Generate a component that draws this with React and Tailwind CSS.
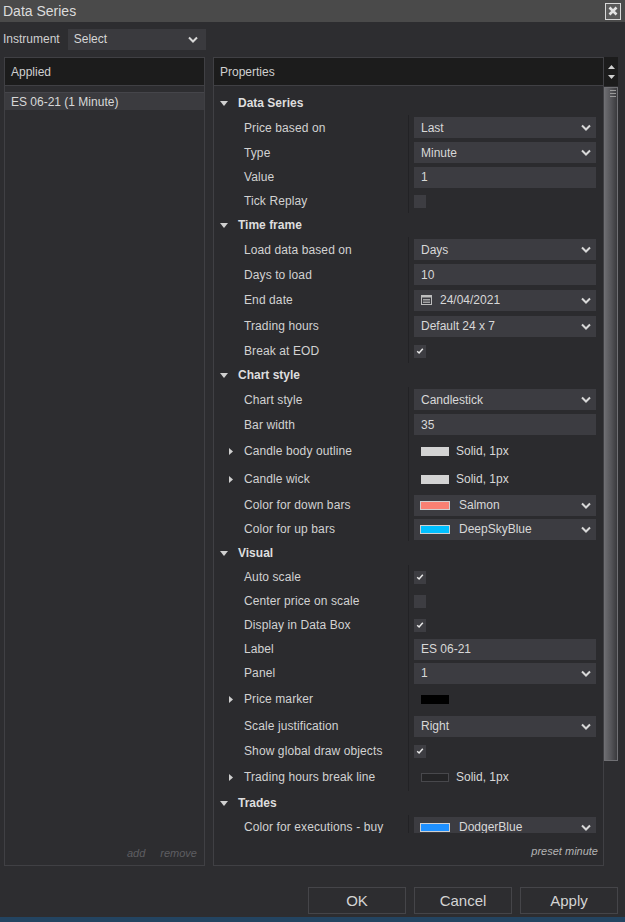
import React from 'react'

const font = { fontFamily: '"Liberation Sans", Arial, sans-serif' }

function Chevron() {
  return (
    <svg width="10" height="7" viewBox="0 0 10 7" className="shrink-0">
      <path d="M1 1.5 L5 5.5 L9 1.5" fill="none" stroke="#d8d8d8" strokeWidth="2" />
    </svg>
  )
}

function Check() {
  return (
    <div className="w-[12px] h-[13px] bg-[#3d3d42] flex items-center justify-center">
      <svg width="8" height="8" viewBox="0 0 8 8">
        <path d="M1.2 4.2 L3.1 6 L6.8 1.8" fill="none" stroke="#e8e8e8" strokeWidth="1.5" />
      </svg>
    </div>
  )
}

function EmptyBox() {
  return <div className="w-[12px] h-[13px] bg-[#3d3d42]" />
}

function Select({ text, swatch, calendar }) {
  return (
    <div className="h-[21px] w-full bg-[#3c3c41] flex items-center pl-[6px] pr-[5px]">
      {swatch && <div className={`w-[30px] h-[9px] border border-[#d0d0d0] mr-[8px] ${swatch}`} />}
      {calendar && (
        <svg width="11" height="10" viewBox="0 0 11 10" className="mr-[7px] ml-[1px]">
          <rect x="0.5" y="0.5" width="10" height="9" fill="none" stroke="#bdbdbd" />
          <rect x="0.5" y="0.5" width="10" height="2" fill="#bdbdbd" />
          <path d="M2 4.5 H9 M2 6 H9 M2 7.5 H9" stroke="#bdbdbd" strokeWidth="0.8" />
        </svg>
      )}
      <span className="flex-1 pl-[1px]">{text}</span>
      <Chevron />
    </div>
  )
}

function TextBox({ text }) {
  return (
    <div className="h-[21px] w-full bg-[#3c3c41] flex items-center pl-[7px]">{text}</div>
  )
}

function Stroke({ swatch, text }) {
  return (
    <div className="flex items-center pl-[7px]">
      <div className={`w-[28px] h-[9px] mr-[7px] ${swatch}`} />
      <span>{text}</span>
    </div>
  )
}

function Row({ h, label, expand, children }) {
  return (
    <div className={`flex ${h}`}>
      <div className="w-[194px] flex items-center pl-[15px]">
        <div className="w-[15px] flex items-center">
          {expand && (
            <svg width="4" height="7" viewBox="0 0 4 7">
              <path d="M0 0 L4 3.5 L0 7 Z" fill="#cfcfcf" />
            </svg>
          )}
        </div>
        <span className="text-[#d2d2d2] whitespace-nowrap tracking-[0.1px]">{label}</span>
      </div>
      <div className="flex-1 border-l border-[#222225] pl-[5px] pr-[7px] flex items-center text-[#d8d8d8]">
        {children}
      </div>
    </div>
  )
}

function Section({ title }) {
  return (
    <div className="h-[24px] flex items-center pl-[6px]">
      <svg width="8" height="5" viewBox="0 0 8 5" className="mr-[10px]">
        <path d="M0 0 L8 0 L4 5 Z" fill="#d0d0d0" />
      </svg>
      <span className="font-bold text-[#dedede]">{title}</span>
    </div>
  )
}

export default function App() {
  return (
    <div className="w-[625px] h-[922px] bg-[#2d2d30] flex flex-col text-[12px] overflow-hidden" style={font}>
      {/* title bar */}
      <div className="h-[22px] bg-[#4a4a4a] flex items-center justify-between pl-[3px] pr-[4px]">
        <span className="text-[14px] text-[#dcdcdc]">Data Series</span>
        <div className="w-[16px] h-[17px] border border-[#d8d8d8] bg-[#5a5a5a] flex items-center justify-center">
          <svg width="10" height="10" viewBox="0 0 10 10">
            <path d="M1.5 1.5 L8.5 8.5 M8.5 1.5 L1.5 8.5" stroke="#e4e4e4" strokeWidth="2.6" />
          </svg>
        </div>
      </div>

      {/* instrument */}
      <div className="flex items-center h-[22px] mt-[6px] pl-[3px]">
        <span className="text-[#d0d0d0] mr-[8px]">Instrument</span>
        <div className="w-[138px] h-[21px] bg-[#3a3a3e] flex items-center pl-[6px] pr-[8px] text-[#d6d6d6]">
          <span className="flex-1">Select</span>
          <Chevron />
        </div>
      </div>

      {/* panels */}
      <div className="flex mt-[7px] pl-[4px] h-[809px]">
        {/* applied */}
        <div className="w-[201px] border border-[#404044] flex flex-col">
          <div className="h-[28px] bg-[#1c1c1c] border-b border-[#404044] flex items-center pl-[6px] text-[#d0d0d0]">
            Applied
          </div>
          <div className="flex-1 pt-[6px]">
            <div className="h-[18px] bg-[#3b3b3f] border-t border-[#45454a] flex items-center pl-[6px] text-[#d8d8d8]">
              ES 06-21 (1 Minute)
            </div>
          </div>
          <div className="h-[28px] flex items-center justify-end pr-[7px] pt-[4px] gap-[15px] italic text-[11px] text-[#5e5e62]">
            <span>add</span>
            <span>remove</span>
          </div>
        </div>

        {/* properties */}
        <div className="ml-[8px] w-[391px] border border-[#404044] flex flex-col bg-[#2b2b2e]">
          <div className="h-[28px] bg-[#1c1c1c] border-b border-[#404044] flex items-center pl-[6px] text-[#d0d0d0] shrink-0">
            Properties
          </div>
          <div className="h-[747px] overflow-hidden pt-[5px] shrink-0">
            <Section title="Data Series" />
            <Row h="h-[25px]" label="Price based on"><Select text="Last" /></Row>
            <Row h="h-[25px]" label="Type"><Select text="Minute" /></Row>
            <Row h="h-[24px]" label="Value"><TextBox text="1" /></Row>
            <Row h="h-[24px]" label="Tick Replay"><EmptyBox /></Row>

            <Section title="Time frame" />
            <Row h="h-[25px]" label="Load data based on"><Select text="Days" /></Row>
            <Row h="h-[25px]" label="Days to load"><TextBox text="10" /></Row>
            <Row h="h-[26px]" label="End date"><Select text="24/04/2021" calendar /></Row>
            <Row h="h-[26px]" label="Trading hours"><Select text="Default 24 x 7" /></Row>
            <Row h="h-[24px]" label="Break at EOD"><Check /></Row>

            <Section title="Chart style" />
            <Row h="h-[25px]" label="Chart style"><Select text="Candlestick" /></Row>
            <Row h="h-[25px]" label="Bar width"><TextBox text="35" /></Row>
            <Row h="h-[28px]" label="Candle body outline" expand>
              <Stroke swatch="bg-[#d3d3d3]" text="Solid, 1px" />
            </Row>
            <Row h="h-[28px]" label="Candle wick" expand>
              <Stroke swatch="bg-[#d3d3d3]" text="Solid, 1px" />
            </Row>
            <Row h="h-[24px]" label="Color for down bars"><Select text="Salmon" swatch="bg-[#fa8072]" /></Row>
            <Row h="h-[24px]" label="Color for up bars"><Select text="DeepSkyBlue" swatch="bg-[#00bfff]" /></Row>

            <Section title="Visual" />
            <Row h="h-[24px]" label="Auto scale"><Check /></Row>
            <Row h="h-[24px]" label="Center price on scale"><EmptyBox /></Row>
            <Row h="h-[24px]" label="Display in Data Box"><Check /></Row>
            <Row h="h-[24px]" label="Label"><TextBox text="ES 06-21" /></Row>
            <Row h="h-[24px]" label="Panel"><Select text="1" /></Row>
            <Row h="h-[28px]" label="Price marker" expand>
              <Stroke swatch="bg-[#000000]" text="" />
            </Row>
            <Row h="h-[26px]" label="Scale justification"><Select text="Right" /></Row>
            <Row h="h-[24px]" label="Show global draw objects"><Check /></Row>
            <Row h="h-[28px]" label="Trading hours break line" expand>
              <Stroke swatch="bg-[#242426] border border-[#48484c]" text="Solid, 1px" />
            </Row>

            <Section title="Trades" />
            <Row h="h-[24px]" label="Color for executions - buy"><Select text="DodgerBlue" swatch="bg-[#1e90ff]" /></Row>
          </div>
          <div className="flex-1 flex items-center justify-end pr-[5px] pt-[4px] italic text-[11px] text-[#b4b4b4]">
            preset minute
          </div>
        </div>

        {/* scrollbar */}
        <div className="w-[14px] flex flex-col">
          <div className="h-[29px] bg-[#1c1c1c] flex flex-col items-center justify-center gap-[6px]">
            <svg width="7" height="4" viewBox="0 0 7 4"><path d="M0 4 L3.5 0 L7 4 Z" fill="#d0d0d0" /></svg>
            <svg width="7" height="4" viewBox="0 0 7 4"><path d="M0 0 L7 0 L3.5 4 Z" fill="#d0d0d0" /></svg>
          </div>
          <div className="h-[674px] border border-[#707074] bg-gradient-to-r from-[#6c6c70] via-[#555559] to-[#3a3a3d] mt-[1px] flex flex-col items-end pt-[2px] pr-[1px] gap-[2px]">
            <div className="w-[6px] h-[1px] bg-[#9a9a9a]" />
            <div className="w-[6px] h-[1px] bg-[#9a9a9a]" />
            <div className="w-[6px] h-[1px] bg-[#9a9a9a]" />
          </div>
        </div>
      </div>

      {/* buttons */}
      <div className="flex justify-end gap-[8px] pr-[7px] mt-[21px]">
        {['OK', 'Cancel', 'Apply'].map(b => (
          <div key={b} className="w-[98px] h-[27px] border border-[#454549] flex items-center justify-center pt-[2px] text-[15px] text-[#d4d4d4]">
            {b}
          </div>
        ))}
      </div>

      <div className="flex-1" />
      <div className="h-[5px] bg-[#234461]" />
    </div>
  )
}
